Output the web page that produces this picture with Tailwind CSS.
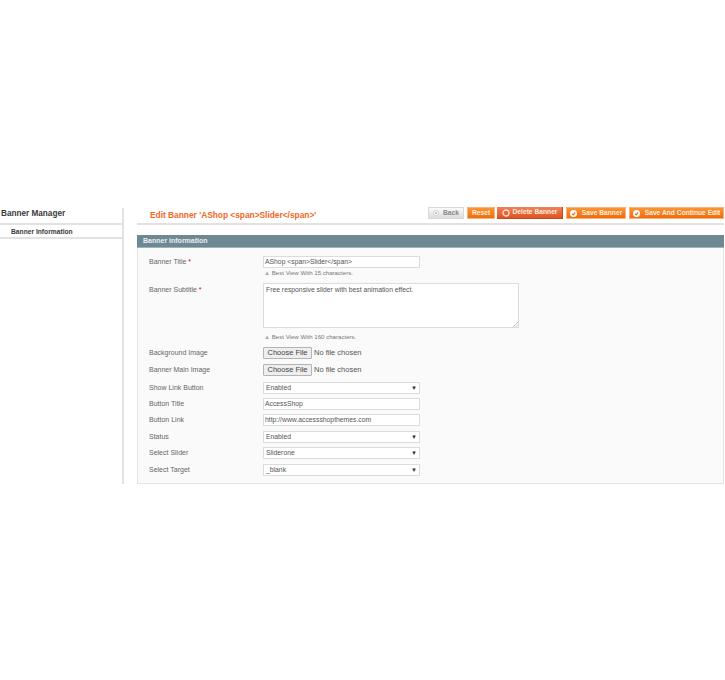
<!DOCTYPE html>
<html lang="en">
  <head>
    <meta charset="UTF-8" />
    <meta name="viewport" content="width=device-width, initial-scale=1.0" />
    <script src="https://cdn.jsdelivr.net/npm/@tailwindcss/browser@4"></script>
    <title>Banner Manager</title>
  </head>
  <body class="bg-white">
    <div class="w-[725px] h-[680px] overflow-hidden flex items-start pt-[208px] font-['Liberation_Sans',sans-serif] text-[#666]">
      <!-- sidebar -->
      <div class="w-[124px] h-[276px] shrink-0 border-r-2 border-[#e2e2e2]">
        <div class="h-[17px] border-b-2 border-[#e2e2e2] pl-[1px] text-[8.2px] leading-[11px] font-bold text-[#3a3a3a]">Banner Manager</div>
        <div class="h-[14px] border-b-2 border-[#e2e2e2] pl-[11px] pt-[1px] text-[6.7px] leading-[11px] font-bold text-[#3a3a3a]">Banner Information</div>
      </div>

      <!-- main -->
      <div class="ml-[13px] w-[587px] shrink-0">
        <div class="h-[17px] border-b-2 border-[#e2e2e2] flex items-start justify-between">
          <div class="pl-[13px] pt-[2px] text-[8.35px] leading-[11px] font-bold text-[#f0691e] whitespace-nowrap">Edit Banner 'AShop &lt;span&gt;Slider&lt;/span&gt;'</div>
          <div class="flex -mt-[1px] text-[6.7px] font-bold text-[#ffeedd] whitespace-nowrap">
            <div class="h-[12px] w-[36px] flex items-center justify-center gap-[4px] bg-gradient-to-b from-[#fbfbfb] to-[#dcdcdc] border border-[#d8d8d8] text-[#888]">
              <svg width="6" height="6" viewBox="0 0 6 6"><circle cx="3" cy="3" r="2.5" fill="#fff" stroke="#ccc" stroke-width="0.8" /><circle cx="3" cy="3" r="0.9" fill="#aaa" /></svg>
              <span>Back</span>
            </div>
            <div class="ml-[3px] h-[12px] w-[28px] flex items-center justify-center bg-gradient-to-b from-[#fb9433] to-[#ee6c0a] border border-[#f5b47c]">Reset</div>
            <div class="ml-[2px] h-[12px] w-[66px] flex items-center justify-center gap-[3px] bg-gradient-to-b from-[#f08058] to-[#dc5420] border-b border-r border-[#c9481a]">
              <svg width="8" height="8" viewBox="0 0 8 8"><circle cx="4" cy="4" r="3" fill="#e8643a" stroke="#ffe0d0" stroke-width="1.3" /></svg>
              <span>Delete Banner</span>
            </div>
            <div class="ml-[3px] h-[12px] w-[60px] flex items-center justify-center gap-[5px] bg-gradient-to-b from-[#fb9433] to-[#ee6c0a] border border-[#f5b47c]">
              <svg width="7" height="7" viewBox="0 0 7 7"><circle cx="3.5" cy="3.5" r="3.5" fill="#fff" /><path d="M2 3.6 3.2 4.8 5.1 2.4" fill="none" stroke="#ec6a0c" stroke-width="1.1" /></svg>
              <span>Save Banner</span>
            </div>
            <div class="ml-[3px] h-[12px] w-[95px] flex items-center justify-center gap-[5px] bg-gradient-to-b from-[#fb9433] to-[#ee6c0a] border border-[#f5b47c]">
              <svg width="7" height="7" viewBox="0 0 7 7"><circle cx="3.5" cy="3.5" r="3.5" fill="#fff" /><path d="M2 3.6 3.2 4.8 5.1 2.4" fill="none" stroke="#ec6a0c" stroke-width="1.1" /></svg>
              <span>Save And Continue Edit</span>
            </div>
          </div>
        </div>

        <div class="mt-[10px] h-[13px] bg-[#6f8992] border-b border-[#9fb2b8] pl-[6px] text-[7px] leading-[12px] font-bold text-[#e8eef0]">Banner information</div>

        <div class="h-[236px] bg-[#fafafa] border-x border-b border-[#e3e3e3] pl-[11px] pt-[8px] text-[7px] leading-[12px]">
          <div class="flex h-[12px]">
            <label class="w-[114px]">Banner Title <span class="text-[#d40707]">*</span></label>
            <input value="AShop <span>Slider</span>" class="w-[157px] h-[12px] bg-white border border-[#dcdcdc] px-[1px] text-[6.8px] text-[#555]" />
          </div>
          <div class="ml-[115px] h-[9px] text-[6.1px] leading-[9px] text-[#777]"><span class="text-[#aaa]">▲</span> Best View With 15 characters.</div>
          <div class="flex mt-[6px] h-[45px]">
            <label class="w-[114px] pt-[1px]">Banner Subtitle <span class="text-[#d40707]">*</span></label>
            <div class="relative">
              <textarea class="block w-[256px] h-[45px] resize-none bg-white border border-[#dcdcdc] px-[2px] py-[1px] text-[6.8px] leading-[9px] text-[#555]">Free responsive slider with best animation effect.</textarea>
              <svg class="absolute right-[1px] bottom-[1px]" width="5" height="5" viewBox="0 0 5 5"><path d="M0 5 5 0M2.5 5 5 2.5" stroke="#999" stroke-width="0.6" /></svg>
            </div>
          </div>
          <div class="ml-[115px] mt-[4px] h-[9px] text-[6.1px] leading-[9px] text-[#777]"><span class="text-[#aaa]">▲</span> Best View With 160 characters.</div>

          <div class="flex items-center mt-[6px] h-[12px]">
            <label class="w-[114px]">Background Image</label>
            <div class="w-[49px] h-[12px] bg-[#eeeeee] border border-[#b4b4b4] rounded-[1px] text-center text-[7.5px] leading-[10px] text-[#444]">Choose File</div>
            <span class="ml-[2px] text-[7.5px] text-[#555]">No file chosen</span>
          </div>
          <div class="flex items-center mt-[5px] h-[12px]">
            <label class="w-[114px]">Banner Main Image</label>
            <div class="w-[49px] h-[12px] bg-[#eeeeee] border border-[#b4b4b4] rounded-[1px] text-center text-[7.5px] leading-[10px] text-[#444]">Choose File</div>
            <span class="ml-[2px] text-[7.5px] text-[#555]">No file chosen</span>
          </div>

          <div class="flex items-center mt-[6px] h-[12px]">
            <label class="w-[114px]">Show Link Button</label>
            <div class="relative w-[157px] h-[12px] bg-white border border-[#dcdcdc] pl-[2px] text-[6.8px] leading-[10px] text-[#555]">Enabled<span class="absolute right-[2px] top-0 text-[6px] text-[#333]">▼</span></div>
          </div>
          <div class="flex items-center mt-[4px] h-[12px]">
            <label class="w-[114px]">Button Title</label>
            <input value="AccessShop" class="w-[157px] h-[12px] bg-white border border-[#dcdcdc] px-[1px] text-[6.8px] text-[#555]" />
          </div>
          <div class="flex items-center mt-[4px] h-[12px]">
            <label class="w-[114px]">Button Link</label>
            <input value="http://www.accessshopthemes.com" class="w-[157px] h-[12px] bg-white border border-[#dcdcdc] px-[1px] text-[6.8px] text-[#555]" />
          </div>
          <div class="flex items-center mt-[5px] h-[12px]">
            <label class="w-[114px]">Status</label>
            <div class="relative w-[157px] h-[12px] bg-white border border-[#dcdcdc] pl-[2px] text-[6.8px] leading-[10px] text-[#555]">Enabled<span class="absolute right-[2px] top-0 text-[6px] text-[#333]">▼</span></div>
          </div>
          <div class="flex items-center mt-[4px] h-[12px]">
            <label class="w-[114px]">Select Slider</label>
            <div class="relative w-[157px] h-[12px] bg-white border border-[#dcdcdc] pl-[2px] text-[6.8px] leading-[10px] text-[#555]">Sliderone<span class="absolute right-[2px] top-0 text-[6px] text-[#333]">▼</span></div>
          </div>
          <div class="flex items-center mt-[5px] h-[12px]">
            <label class="w-[114px]">Select Target</label>
            <div class="relative w-[157px] h-[12px] bg-white border border-[#dcdcdc] pl-[2px] text-[6.8px] leading-[10px] text-[#555]">_blank<span class="absolute right-[2px] top-0 text-[6px] text-[#333]">▼</span></div>
          </div>
        </div>
      </div>
    </div>
  </body>
</html>
